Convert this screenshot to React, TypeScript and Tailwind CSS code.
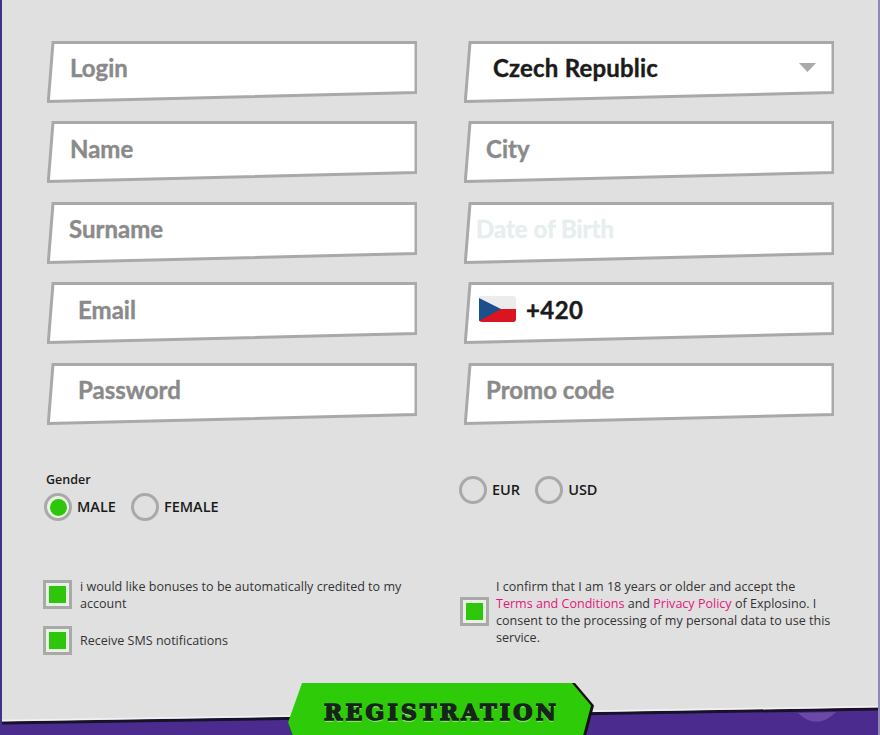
const lato = "font-['Lato',sans-serif]";
const sans = "font-['Open_Sans','Noto_Sans',sans-serif]";

function Field({ pad, className, children }: { pad: string; className?: string; children: React.ReactNode }) {
  return (
    <div className={`relative flex h-[62px] items-center pb-[7px] ${pad}`}>
      <svg className="absolute inset-0 h-full w-full" viewBox="0 0 370 62" aria-hidden="true">
        <polygon points="6,1.5 369,1.5 369,51.5 1.3,60.5" fill="#fff" stroke="#a9a9a9" strokeWidth="3" />
      </svg>
      <span className={`relative text-[24px] font-bold leading-none [-webkit-text-stroke:0.4px_currentColor] ${lato} ${className ?? "text-[#8a8a8a]"}`}>
        {children}
      </span>
    </div>
  );
}

function Radio({ label, checked }: { label: string; checked?: boolean }) {
  return (
    <div className="flex items-center gap-[5px]">
      <span className={`flex h-[28px] w-[28px] items-center justify-center rounded-full border-[3px] border-[#a9a9a9] ${checked ? "bg-[#e8f3e6]" : ""}`}>
        {checked && <span className="h-[17px] w-[17px] rounded-full bg-[#2ec60a]" />}
      </span>
      <span className={`text-[14.5px] font-semibold leading-none text-[#1a1a1a] ${sans}`}>{label}</span>
    </div>
  );
}

function Check() {
  return (
    <span className="flex h-[29px] w-[29px] shrink-0 items-center justify-center border-[3px] border-[#a9a9a9] bg-[#e6f3e3]">
      <span className="h-[17px] w-[17px] bg-[#2ec60a]" />
    </span>
  );
}

export default function App() {
  return (
    <div className="relative h-[735px] w-[880px] overflow-hidden border-l-[2px] border-r-[2px] border-l-[#43308a] border-r-[#8f88b4] bg-[#e0e0e1]">
      {/* bottom band */}
      <svg className="absolute bottom-0 left-[-2px] h-[30px] w-[880px]" viewBox="0 0 880 30" aria-hidden="true">
        <polygon points="0,18 880,4 880,30 0,30" fill="#4c2b8f" />
        <path d="M798 8 Q817 26 836 7 Z" fill="#6a4aa6" />
        <line x1="0" y1="18" x2="880" y2="4" stroke="#17122a" strokeWidth="3" />
        <line x1="0" y1="15.5" x2="880" y2="1.5" stroke="#f2f2f2" strokeWidth="1.5" />
      </svg>

      <div className="grid grid-cols-[370px_370px] gap-x-[47px] gap-y-[18.5px] pl-[45px] pt-[40.5px]">
        <Field pad="pl-[23px]">Login</Field>
        <div className="relative">
          <Field pad="pl-[29px]" className="tracking-[0.2px] text-[#1b1b1b]">Czech Republic</Field>
          <svg className="absolute right-[18px] top-[22px] h-[9px] w-[17px]" viewBox="0 0 17 9" aria-hidden="true">
            <polygon points="0,0 17,0 8.5,9" fill="#a9a9a9" />
          </svg>
        </div>
        <Field pad="pl-[23px]">Name</Field>
        <Field pad="pl-[22px]">City</Field>
        <Field pad="pl-[22px]">Surname</Field>
        <Field pad="pl-[12px]" className="text-[#e6eeee]">Date of Birth</Field>
        <Field pad="pl-[31px]">Email</Field>
        <div className="relative">
          <Field pad="pl-[62px]" className="tracking-[0.4px] text-[#1b1b1b]">+420</Field>
          <svg className="absolute left-[15px] top-[14px] h-[26px] w-[37px]" viewBox="0 0 37 26" aria-hidden="true">
            <rect width="37" height="26" rx="3" fill="#ececec" />
            <path d="M0 13H37V23a3 3 0 0 1-3 3H3a3 3 0 0 1-3-3Z" fill="#d9161f" />
            <path d="M0 2L22 13 0 25Z" fill="#1c4f8e" />
          </svg>
        </div>
        <Field pad="pl-[31px]">Password</Field>
        <Field pad="pl-[22px]">Promo code</Field>
      </div>

      <div className="mt-[47px] grid h-[60px] grid-cols-[370px_370px] gap-x-[47px] pl-[42px]">
        <div>
          <div className={`mb-[5.5px] pl-[2px] text-[12.5px] font-semibold leading-[16px] text-[#1a1a1a] ${sans}`}>Gender</div>
          <div className="flex gap-[15px]">
            <Radio label="MALE" checked />
            <Radio label="FEMALE" />
          </div>
        </div>
        <div className="ml-[-2px] flex items-start gap-[15px] pt-[4.5px]">
          <Radio label="EUR" />
          <Radio label="USD" />
        </div>
      </div>

      <div className={`mt-[46px] grid h-[90px] grid-cols-[370px_370px] gap-x-[47px] pl-[41px] text-[12.55px] leading-[17px] text-[#333] ${sans}`}>
        <div className="flex flex-col gap-[14.5px]">
          <div className="flex items-center gap-[8px]">
            <Check />
            <span className="w-[330px]">i would like bonuses to be automatically credited to my account</span>
          </div>
          <div className="flex items-center gap-[8px]">
            <Check />
            <span>Receive SMS notifications</span>
          </div>
        </div>
        <div className="flex items-start gap-[7px]">
          <span className="mt-[19px]"><Check /></span>
          <p className="w-[345px] shrink-0">
            I confirm that I am 18 years or older and accept the
            <br />
            <span className="text-[#e2187c]">Terms and Conditions</span> and{" "}
            <span className="text-[#e2187c]">Privacy Policy</span> of Explosino. I
            <br />
            consent to the processing of my personal data to use this
            <br />
            service.
          </p>
        </div>
      </div>

      {/* registration button */}
      <div className="relative z-10 ml-[282px] mt-[15px] flex h-[53px] w-[310px] items-center justify-center pl-[5px] pt-[5px]">
        <svg className="absolute inset-0 h-full w-full" viewBox="0 0 310 53" aria-hidden="true">
          <polygon points="21,0 291,0 310,22.5 302,53 9,53 4,39.5" fill="#111" />
          <polygon points="18,0 288,0 307,22.5 299,53 9,53 4,39.5" fill="#2ecb08" />
        </svg>
        <span className="relative font-['DejaVu_Serif',serif] text-[22px] font-bold leading-none tracking-[3.2px] text-[#16251a] [-webkit-text-stroke:1.5px_#16251a] [text-shadow:0_2px_0_#86e36a]">
          REGISTRATION
        </span>
      </div>
    </div>
  );
}
